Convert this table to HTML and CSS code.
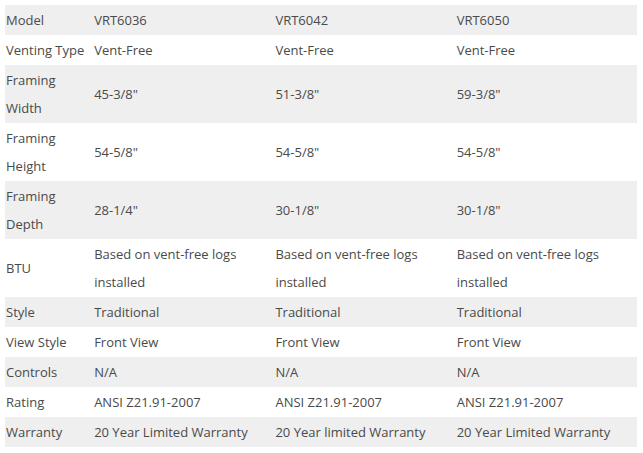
FILE: index.html
```html
<!DOCTYPE html>
<html>
<head>
<meta charset="utf-8">
<link rel="stylesheet" href="styles.css">
</head>
<body>
<table class="specs">
  <colgroup>
    <col class="c-label"><col class="c-val"><col class="c-val"><col class="c-val">
  </colgroup>
  <tbody>
    <tr><td>Model</td><td>VRT6036</td><td>VRT6042</td><td>VRT6050</td></tr>
    <tr><td>Venting Type</td><td>Vent-Free</td><td>Vent-Free</td><td>Vent-Free</td></tr>
    <tr><td>Framing Width</td><td>45-3/8"</td><td>51-3/8"</td><td>59-3/8"</td></tr>
    <tr><td>Framing Height</td><td>54-5/8"</td><td>54-5/8"</td><td>54-5/8"</td></tr>
    <tr><td>Framing Depth</td><td>28-1/4"</td><td>30-1/8"</td><td>30-1/8"</td></tr>
    <tr><td>BTU</td><td>Based on vent-free logs installed</td><td>Based on vent-free logs installed</td><td>Based on vent-free logs installed</td></tr>
    <tr><td>Style</td><td>Traditional</td><td>Traditional</td><td>Traditional</td></tr>
    <tr><td>View Style</td><td>Front View</td><td>Front View</td><td>Front View</td></tr>
    <tr><td>Controls</td><td>N/A</td><td>N/A</td><td>N/A</td></tr>
    <tr><td>Rating</td><td>ANSI Z21.91-2007</td><td>ANSI Z21.91-2007</td><td>ANSI Z21.91-2007</td></tr>
    <tr><td>Warranty</td><td>20 Year Limited Warranty</td><td>20 Year limited Warranty</td><td>20 Year Limited Warranty</td></tr>
  </tbody>
</table>
</body>
</html>
```
FILE: styles.css
```css
html, body {
  margin: 0;
  padding: 0;
  background: #ffffff;
}
body {
  padding: 5px 6px 0 5px;
  font-family: "Open Sans", "Noto Sans", sans-serif;
  font-size: 13px;
  font-weight: 500;
  color: #4a4a4a;
}
.specs {
  width: 632px;
  border-collapse: collapse;
  table-layout: fixed;
}
.c-label { width: 88px; }
.c-val { width: 181px; }
.specs td {
  padding: 1px 4px 1px 1px;
  line-height: 28px;
  vertical-align: middle;
}
.specs tr:nth-child(odd) td {
  background: #efefef;
}
```
